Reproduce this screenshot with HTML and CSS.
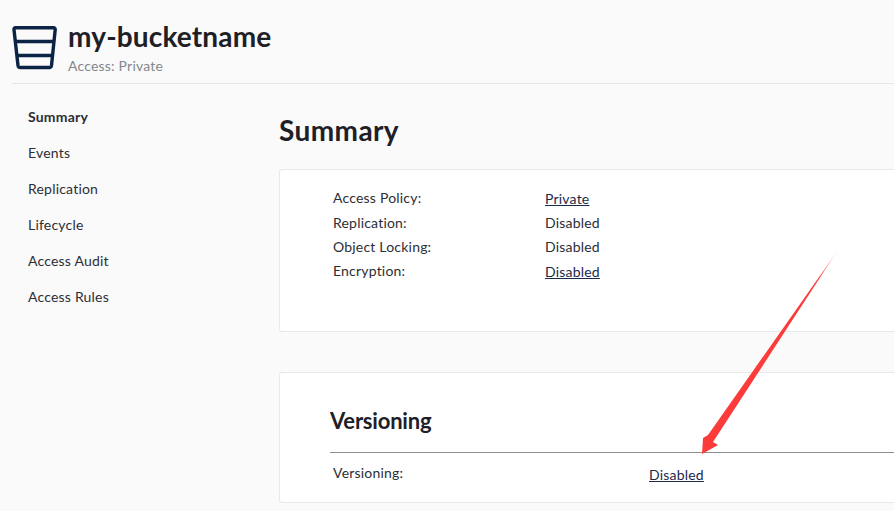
FILE: index.html
```html
<!DOCTYPE html>
<html lang="en">
<head>
<meta charset="utf-8">
<title>my-bucketname</title>
<link rel="stylesheet" href="styles.css">
</head>
<body>
<header class="header">
  <svg class="bucket" width="45" height="44" viewBox="0 0 45 44" fill="none" stroke="#0b2345" stroke-width="3.4" stroke-linejoin="round">
    <path d="M3.500 1.800H41.500Q43.400 1.800 43.200 3.700L39.500 39.500Q39.200 41.500 37.300 41.500H8.200Q6.300 41.500 6 39.500L2 3.700Q1.800 1.800 3.500 1.800Z"/>
    <path d="M3 15.500H42"/>
    <path d="M5 29.500H40.500"/>
  </svg>
  <div class="head-text">
    <h1 class="bucket-name">my-bucketname</h1>
    <div class="access">Access: Private</div>
  </div>
</header>
<div class="body">
  <nav class="side">
    <a class="nav-item active">Summary</a>
    <a class="nav-item">Events</a>
    <a class="nav-item">Replication</a>
    <a class="nav-item">Lifecycle</a>
    <a class="nav-item">Access Audit</a>
    <a class="nav-item">Access Rules</a>
  </nav>
  <main class="main">
    <h2 class="title">Summary</h2>
    <section class="card card-summary">
      <div class="row row-first"><span class="label">Access Policy:</span><a class="value link">Private</a></div>
      <div class="row"><span class="label">Replication:</span><span class="value">Disabled</span></div>
      <div class="row"><span class="label">Object Locking:</span><span class="value">Disabled</span></div>
      <div class="row"><span class="label">Encryption:</span><a class="value link">Disabled</a></div>
    </section>
    <section class="card card-versioning">
      <h3 class="card-title">Versioning</h3>
      <div class="row row-versioning"><span class="label">Versioning:</span><a class="value link">Disabled</a></div>
    </section>
  </main>
</div>
<svg class="arrow" width="894" height="511" viewBox="0 0 894 511">
  <defs>
    <linearGradient id="fade" gradientUnits="userSpaceOnUse" x1="838" y1="250" x2="818" y2="280">
      <stop offset="0" stop-color="#fc3b3b" stop-opacity=".1"/>
      <stop offset="1" stop-color="#fc3b3b"/>
    </linearGradient>
  </defs>
  <polygon points="838,250 713,442 718,445 702,454 703,438 708,435" fill="url(#fade)"/>
</svg>
</body>
</html>
```
FILE: styles.css
```css
* { box-sizing: border-box; }
html, body { margin: 0; height: 100%; }
body {
  width: 894px;
  height: 511px;
  overflow: hidden;
  position: relative;
  background: #fafafa;
  font-family: Lato, sans-serif;
  color: #22242a;
  font-size: 14px;
  letter-spacing: .2px;
}
.header {
  height: 84px;
  margin-left: 12px;
  border-bottom: 1px solid #e6e6e6;
  display: flex;
  align-items: flex-start;
  padding-top: 26px;
  gap: 11px;
}
.bucket { flex: none; }
.head-text { margin-top: -9px; }
.bucket-name {
  margin: 0;
  font-size: 28px;
  line-height: 38px;
  font-weight: 700;
  color: #1e2026;
  letter-spacing: .16px;
}
.access { font-size: 14px; line-height: 20px; color: #85878c; margin-top: 1px; }
.body { display: flex; }
.side {
  width: 279px;
  flex: none;
  padding: 23px 0 0 28px;
  display: flex;
  flex-direction: column;
  gap: 16px;
}
.nav-item { font-size: 14px; line-height: 20px; color: #2c2e35; }
.nav-item.active { font-weight: 700; }
.main { flex: none; width: 615px; }
.title {
  margin: 27px 0 20px;
  font-size: 28px;
  line-height: 38px;
  font-weight: 700;
  color: #1e2026;
  letter-spacing: .4px;
}
.card {
  background: #fff;
  border: 1px solid #e9e9e9;
  border-right: 0;
  border-radius: 3px 0 0 3px;
}
.card-summary { height: 163px; padding: 16px 0 0 53px; margin-bottom: 40px; }
.card-versioning { height: 131px; padding: 33px 0 0 50px; }
.card-title {
  margin: 0;
  font-size: 22px;
  line-height: 30px;
  font-weight: 700;
  color: #1e2026;
  letter-spacing: -.2px;
  height: 47px;
  border-bottom: 1px solid #8e8e8e;
}
.row { display: flex; height: 24px; line-height: 24px; }
.row-first { height: 25px; }
.label { width: 212px; flex: none; color: #2c2e35; }
.value { color: #2c2e35; }
.link { color: #1b2a4a; text-decoration: underline; position: relative; top: 1px; }
.row-versioning { margin: 8px 0 0 3px; }
.row-versioning .label { width: 316px; }
.row-versioning .link { top: 2px; }
.arrow { position: absolute; left: 0; top: 0; pointer-events: none; }
```
